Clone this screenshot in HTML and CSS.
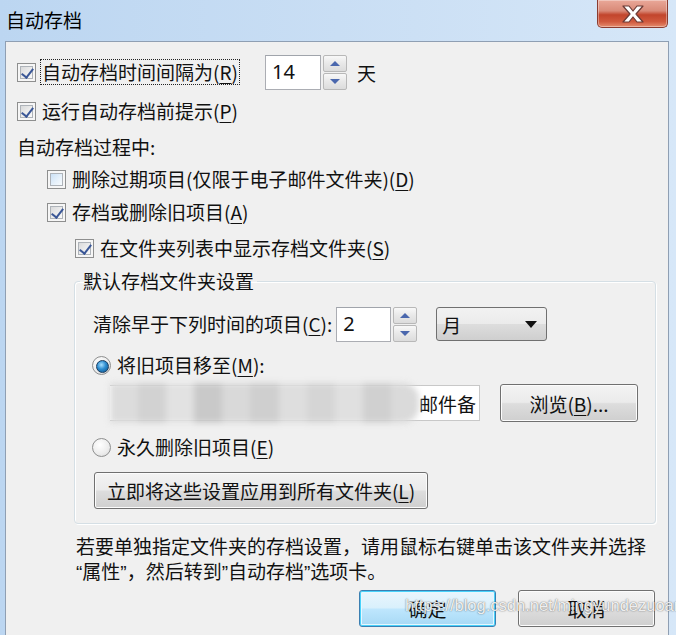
FILE: index.html
```html
<!DOCTYPE html>
<html lang="zh-CN">
<head>
    <meta charset="UTF-8">
    <title>自动存档</title>
    <link rel="stylesheet" href="styles.css">
</head>
<body>
    <div class="window">
        <div class="titlebar">
            <div class="title">自动存档</div>
            <div class="close">
                <svg width="30" height="20" viewBox="0 0 30 20">
                    <polygon points="5,2 11,2 15,7 19,2 25,2 18,10 25,18 19,18 15,13 11,18 5,18 12,10"
                             fill="#fff" stroke="#6b3a35" stroke-width="1.2" stroke-linejoin="round"/>
                </svg>
            </div>
        </div>

        <div class="frame">
            <div class="client">
                <div class="row row-first">
                    <span class="check checked"></span>
                    <span class="label focus">自动存档时间间隔为(<u>R</u>)</span>
                    <div class="spin spin-days">
                        <div class="spin-input">14</div>
                        <div class="spin-btns">
                            <span class="spin-btn"><svg width="12" height="7" viewBox="0 0 12 7"><polygon points="1,6 6,1 11,6" fill="#4a67ad"/></svg></span>
                            <span class="spin-btn"><svg width="12" height="7" viewBox="0 0 12 7"><polygon points="1,1 6,6 11,1" fill="#4a67ad"/></svg></span>
                        </div>
                    </div>
                    <span class="unit">天</span>
                </div>

                <div class="row">
                    <span class="check checked"></span>
                    <span class="label">运行自动存档前提示(<u>P</u>)</span>
                </div>

                <div class="row heading">自动存档过程中:</div>

                <div class="row indent-1">
                    <span class="check"></span>
                    <span class="label">删除过期项目(仅限于电子邮件文件夹)(<u>D</u>)</span>
                </div>

                <div class="row indent-1">
                    <span class="check checked"></span>
                    <span class="label">存档或删除旧项目(<u>A</u>)</span>
                </div>

                <div class="row indent-2">
                    <span class="check checked"></span>
                    <span class="label">在文件夹列表中显示存档文件夹(<u>S</u>)</span>
                </div>

                <fieldset class="group">
                    <legend>默认存档文件夹设置</legend>

                    <div class="row row-clear">
                        <span class="label">清除早于下列时间的项目(<u>C</u>):</span>
                        <div class="spin spin-months">
                            <div class="spin-input">2</div>
                            <div class="spin-btns">
                                <span class="spin-btn"><svg width="12" height="7" viewBox="0 0 12 7"><polygon points="1,6 6,1 11,6" fill="#4a67ad"/></svg></span>
                                <span class="spin-btn"><svg width="12" height="7" viewBox="0 0 12 7"><polygon points="1,1 6,6 11,1" fill="#4a67ad"/></svg></span>
                            </div>
                        </div>
                        <div class="select">
                            <span>月</span>
                            <svg width="12" height="7" viewBox="0 0 12 7"><polygon points="0,0 12,0 6,7" fill="#111"/></svg>
                        </div>
                    </div>

                    <div class="row radio-row">
                        <span class="radio checked"></span>
                        <span class="label">将旧项目移至(<u>M</u>):</span>
                    </div>

                    <div class="row path-row">
                        <div class="path">
                            <div class="blur">
                                <span class="px" style="background:#dcdcdc"></span>
                                <span class="px" style="background:#d2d2d2"></span>
                                <span class="px" style="background:#e2e2e2"></span>
                                <span class="px" style="background:#c9c9c9"></span>
                                <span class="px" style="background:#d9d9d9"></span>
                                <span class="px" style="background:#cfcfcf"></span>
                                <span class="px" style="background:#dedede"></span>
                                <span class="px" style="background:#d5d5d5"></span>
                                <span class="px" style="background:#e0e0e0"></span>
                                <span class="px" style="background:#d0d0d0"></span>
                                <span class="px" style="background:#dadada"></span>
                            </div>
                            <span class="path-text">邮件备</span>
                        </div>
                        <div class="btn btn-browse">浏览(<u>B</u>)...</div>
                    </div>

                    <div class="row radio-row">
                        <span class="radio"></span>
                        <span class="label">永久删除旧项目(<u>E</u>)</span>
                    </div>

                    <div class="btn btn-apply">立即将这些设置应用到所有文件夹(<u>L</u>)</div>
                </fieldset>

                <p class="note">若要单独指定文件夹的存档设置，请用鼠标右键单击该文件夹并选择<br><span class="q">“</span>属性<span class="q">”</span>，然后转到<span class="q">”</span>自动存档<span class="q">”</span>选项卡。</p>

                <div class="actions">
                    <div class="btn btn-default">确定</div>
                    <div class="btn">取消</div>
                </div>
            </div>
        </div>

        <div class="watermark">https://blog.csdn.net/mingyundezuoan</div>
    </div>
</body>
</html>
```

FILE: styles.css
```css
* {
    box-sizing: border-box;
}

body {
    margin: 0;
    font-family: "Noto Sans CJK SC", "Noto Sans", sans-serif;
    font-size: 19px;
    color: #111;
}

u {
    text-decoration-thickness: 1px;
    text-underline-offset: 3px;
}

.window {
    position: relative;
    width: 676px;
    height: 635px;
    overflow: hidden;
    background: linear-gradient(90deg, #bcd6f1 0%, #c9def4 50%, #d6e7f8 100%);
}

.titlebar {
    height: 41px;
    display: flex;
    justify-content: space-between;
    align-items: flex-start;
}

.title {
    padding: 7px 0 0 6px;
    line-height: 26px;
    font-size: 19px;
    color: #000;
}

.close {
    width: 71px;
    height: 28px;
    margin-right: 8px;
    border: 1px solid #8b3c30;
    border-top: none;
    border-radius: 0 0 5px 5px;
    background: linear-gradient(180deg, #e9a899 0%, #d98a78 40%, #c2452c 55%, #d0593d 80%, #e58d6f 100%);
    box-shadow: inset 0 0 0 1px rgba(255, 255, 255, 0.35);
    display: flex;
    align-items: center;
    justify-content: center;
}

.frame {
    padding: 0 7px 0 5px;
}

.client {
    height: 620px;
    background: #f0f0f0;
    border: 1px solid #8f9fb3;
    padding: 12px 13px 0 11px;
}

.row {
    display: flex;
    align-items: center;
    height: 30px;
    margin-top: 6px;
    white-space: nowrap;
}

.row-first {
    height: 36px;
    margin-top: 0;
}

.heading {
    margin-top: 5px;
}

.indent-1 {
    padding-left: 30px;
    margin-top: 3px;
}

.indent-2 {
    padding-left: 58px;
}

.label {
    line-height: 24px;
    padding: 0 1px;
    margin-left: 5px;
}

.focus {
    border: 1px dotted #222;
    margin-left: 4px;
}

.check {
    position: relative;
    width: 19px;
    height: 19px;
    flex: none;
    border: 1px solid #8e8f8f;
    background: #f6f6f6;
}

.check::before {
    content: "";
    position: absolute;
    left: 2px;
    top: 2px;
    right: 2px;
    bottom: 2px;
    border: 1px solid #aeb3b9;
    background: linear-gradient(135deg, #cbe1f6 0%, #e8f2fb 60%, #f7fbfe 100%);
}

.check.checked::before {
    background: linear-gradient(135deg, #d9dadb 0%, #eeeeee 60%, #fafafa 100%);
}

.check.checked::after {
    content: "";
    position: absolute;
    left: 6px;
    top: 2px;
    width: 5px;
    height: 10px;
    border: solid #3a5797;
    border-width: 0 2.5px 2.5px 0;
    transform: rotate(38deg);
}

.spin {
    display: flex;
    align-items: stretch;
    height: 35px;
}

.spin-days {
    margin-left: 25px;
}

.spin-input {
    background: #fff;
    border: 1px solid #abadb3;
    border-top-color: #a0a4ab;
    padding: 2px 0 0 6px;
    line-height: 28px;
    font-size: 20px;
    font-family: "Noto Sans", sans-serif;
}

.spin-days .spin-input {
    width: 56px;
}

.spin-months .spin-input {
    width: 55px;
}

.spin-btns {
    display: flex;
    flex-direction: column;
    width: 24px;
    margin-left: 2px;
    gap: 1px;
}

.spin-btn {
    flex: 1;
    display: flex;
    align-items: center;
    justify-content: center;
    border: 1px solid #b8b8b8;
    border-radius: 2px;
    background: linear-gradient(180deg, #f8f8f8 0%, #e8e8e8 50%, #dcdcdc 100%);
}

.unit {
    margin-left: 10px;
}

.group {
    margin: 5px 0 0 57px;
    width: 582px;
    height: 256px;
    padding: 0 16px 0 17px;
    border: 1px solid #d5dfe5;
    border-radius: 4px;
    box-shadow: inset 1px 1px 0 #fff, 1px 1px 0 #fff;
}

.group legend {
    padding: 0 3px;
    margin-left: -12px;
    line-height: 26px;
}

.row-clear {
    height: 36px;
    margin-top: 12px;
}

.row-clear .label {
    margin-left: 0;
}

.spin-months {
    margin-left: 3px;
}

.select {
    margin-left: 19px;
    width: 111px;
    height: 34px;
    border: 1px solid #707070;
    border-radius: 3px;
    background: linear-gradient(180deg, #f2f2f2 0%, #ebebeb 50%, #dddddd 51%, #cfcfcf 100%);
    display: flex;
    align-items: center;
    justify-content: space-between;
    padding: 0 9px 0 5px;
}

.radio-row {
    margin-top: 8px;
}

.radio {
    position: relative;
    width: 19px;
    height: 19px;
    flex: none;
    border-radius: 50%;
    border: 1px solid #8e8f8f;
    background: radial-gradient(circle at 40% 35%, #ffffff 0%, #ececec 60%, #d4d4d4 100%);
}

.radio.checked::after {
    content: "";
    position: absolute;
    left: 3px;
    top: 3px;
    width: 11px;
    height: 11px;
    border-radius: 50%;
    border: 1px solid #1b3d5f;
    background: radial-gradient(circle at 40% 35%, #a7e0ff 0%, #2c8cd0 45%, #0b4f85 100%);
}

.path-row {
    height: 42px;
    margin-top: 2px;
    padding-left: 18px;
}

.path {
    width: 370px;
    height: 36px;
    background: #fff;
    border: 1px solid #c8c8c8;
    border-left: none;
    display: flex;
    align-items: center;
    justify-content: space-between;
    overflow: visible;
}

.blur {
    display: flex;
    width: 318px;
    height: 40px;
    filter: blur(3px);
    border-radius: 0 16px 16px 0;
    overflow: hidden;
}

.px {
    flex: 1;
}

.path-text {
    padding-right: 3px;
}

.btn {
    display: flex;
    align-items: center;
    justify-content: center;
    height: 38px;
    border: 1px solid #707070;
    border-radius: 3px;
    background: linear-gradient(180deg, #f3f3f3 0%, #ebebeb 48%, #dddddd 52%, #cfcfcf 100%);
    box-shadow: inset 0 0 0 1px #fcfcfc;
    white-space: nowrap;
}

.btn-browse {
    width: 138px;
    margin-left: 20px;
}

.btn-apply {
    width: 334px;
    height: 37px;
    margin-top: 10px;
    margin-left: 2px;
}

.note {
    margin: 9px 0 0 59px;
    line-height: 25px;
}

.q {
    font-family: "Liberation Sans", Arial, sans-serif;
}

.actions {
    display: flex;
    justify-content: flex-end;
    gap: 22px;
    margin-top: 5px;
}

.actions .btn {
    width: 137px;
    height: 37px;
}

.actions .btn-default {
    border-color: #3c7fb1;
    background: linear-gradient(180deg, #eaf6fd 0%, #d9f0fc 48%, #bee6fd 52%, #a7d9f5 100%);
    box-shadow: inset 0 0 0 1px #48d2fb, inset 0 0 0 2px #e6f7fe;
}

.watermark {
    position: absolute;
    left: 405px;
    top: 596px;
    font-family: "Liberation Sans", Arial, sans-serif;
    font-size: 16.5px;
    color: rgba(255, 255, 255, 0.9);
    text-shadow: 0 0 1px rgba(60, 60, 60, 0.6), 0 0 2px rgba(60, 60, 60, 0.4);
    white-space: nowrap;
}
```
